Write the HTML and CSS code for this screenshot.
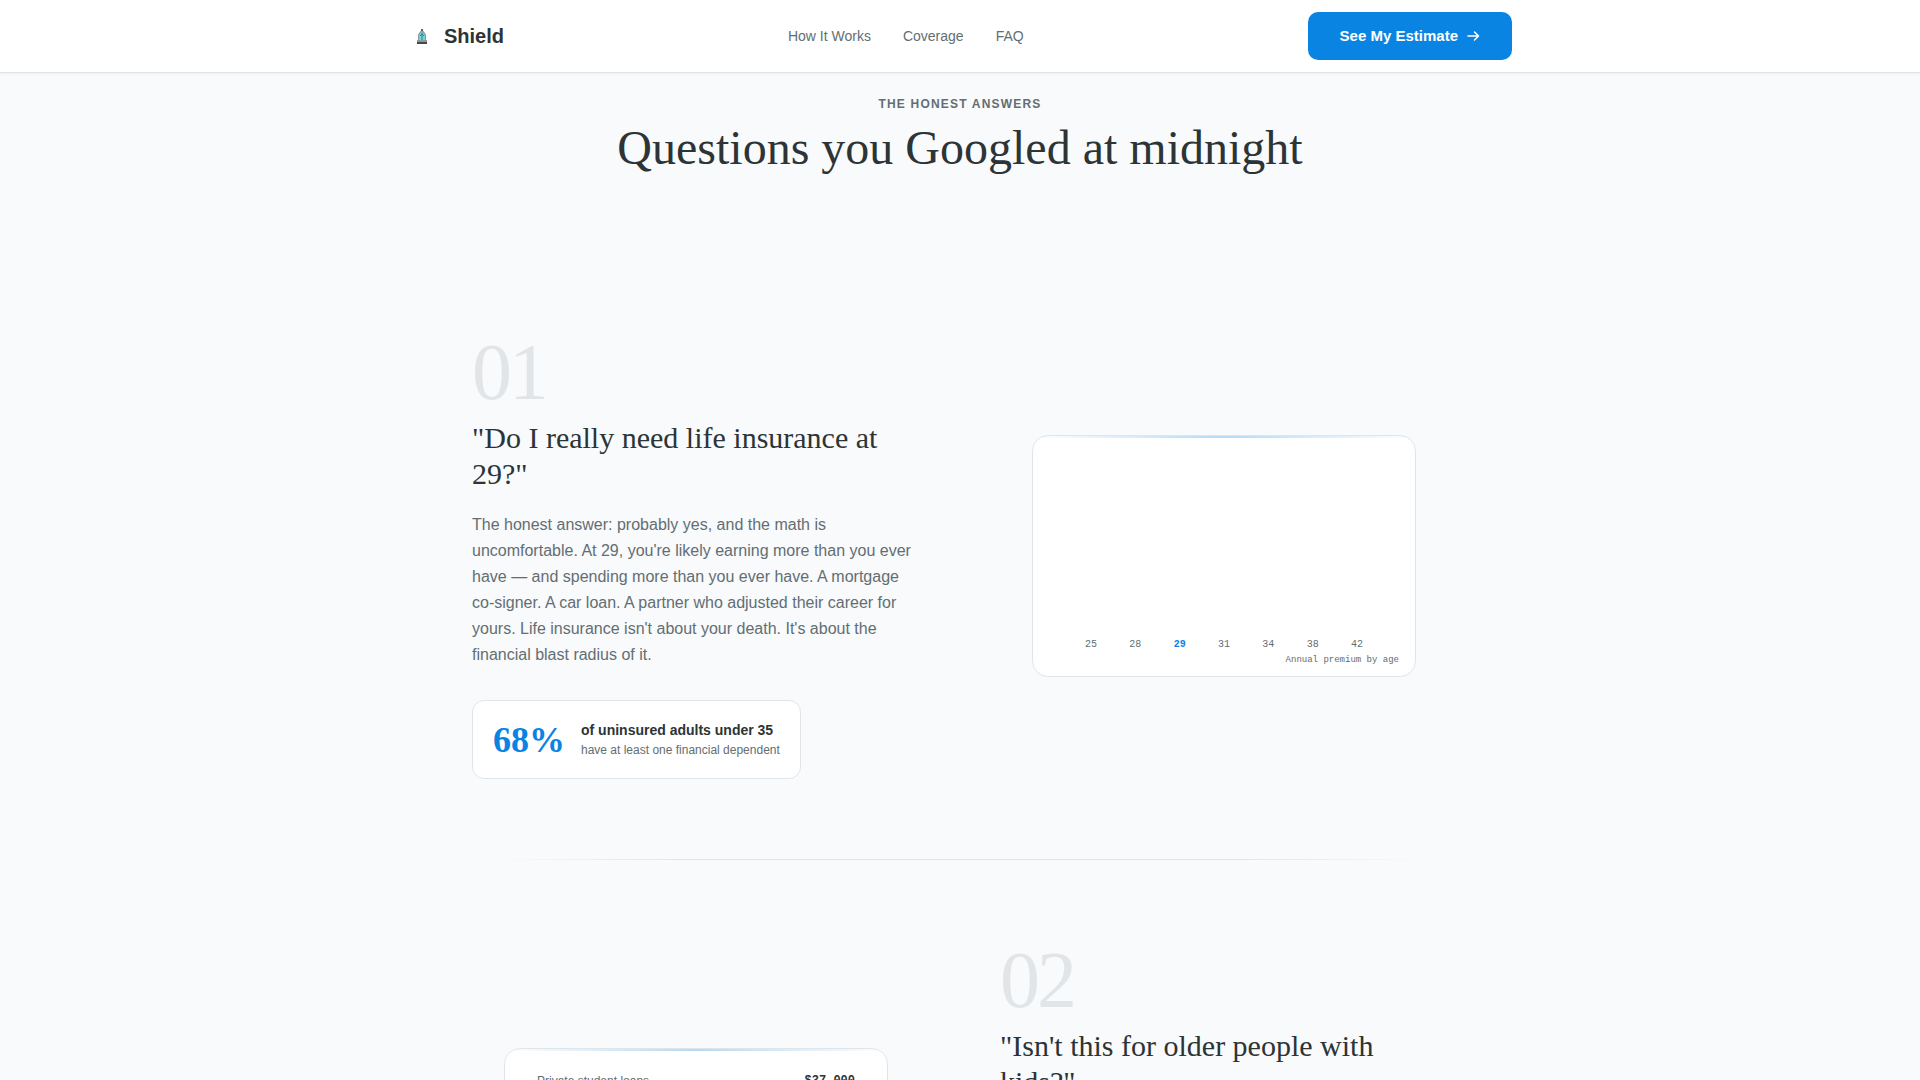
FILE: index.html
```html
<!DOCTYPE html>
<html lang="en">
<head>
<meta charset="utf-8">
<meta name="viewport" content="width=device-width, initial-scale=1">
<title>Shield</title>
<link rel="stylesheet" href="styles.css">
</head>
<body>
<header class="nav">
  <div class="nav-inner">
    <a class="brand" href="#">
      <svg class="brand-mark" viewBox="0 0 28 28" aria-hidden="true">
        <path d="M10 19v-5q0-2 1-3t3-4q2 3 3 4t1 3v5z" fill="#8d9a9c"/>
        <path d="M13 7h2v2h-2z" fill="#5b6669"/>
        <path d="M11 18v-4q0-2 3-4q3 2 3 4v4z" fill="#74d3dc"/>
        <path d="M14 11v8M12 14l2-2 2 2" stroke="#2b8794" stroke-width="1" fill="none"/>
        <path d="M9 18h10v2H9z" fill="#8d9a9c"/>
        <path d="M9 20h10v2H9z" fill="#43484b"/>
      </svg>
      <span>Shield</span>
    </a>
    <nav class="links">
      <a href="#how">How It Works</a>
      <a href="#coverage">Coverage</a>
      <a href="#faq">FAQ</a>
    </nav>
    <button class="cta" type="button">See My Estimate
      <svg viewBox="0 0 14 14" aria-hidden="true"><path d="M2 7h10.500M8.500 3l4 4-4 4" fill="none" stroke="currentColor" stroke-width="1.500" stroke-linecap="round" stroke-linejoin="round"/></svg>
    </button>
  </div>
</header>
<main id="faq">
  <div class="intro">
    <p class="eyebrow">The honest answers</p>
    <h1>Questions you Googled at midnight</h1>
  </div>
  <div class="questions">
    <article class="qa">
      <div class="qa-text">
        <div class="number">01</div>
        <h2>"Do I really need life insurance at 29?"</h2>
        <p class="answer">The honest answer: probably yes, and the math is uncomfortable. At 29, you're likely earning more than you ever have — and spending more than you ever have. A mortgage co-signer. A car loan. A partner who adjusted their career for yours. Life insurance isn't about your death. It's about the financial blast radius of it.</p>
        <div class="stat">
          <span class="stat-value">68%</span>
          <p class="stat-label"><strong>of uninsured adults under 35</strong><span>have at least one financial dependent</span></p>
        </div>
      </div>
      <div class="qa-visual">
        <div class="card chart">
          <ol class="ages">
            <li>25</li><li>28</li><li class="current">29</li><li>31</li><li>34</li><li>38</li><li>42</li>
          </ol>
          <p class="caption">Annual premium by age</p>
        </div>
      </div>
    </article>
    <hr class="divider">
    <article class="qa qa-flip">
      <div class="qa-visual">
        <div class="card debts">
          <dl>
            <dt>Private student loans</dt><dd>$37,000</dd>
          </dl>
        </div>
      </div>
      <div class="qa-text">
        <div class="number">02</div>
        <h2>"Isn't this for older people with kids?"</h2>
      </div>
    </article>
  </div>
</main>
</body>
</html>
```
FILE: styles.css
```css
* { box-sizing: border-box; margin: 0; padding: 0; }

:root {
  --ink: #2d3436;
  --muted: #636e72;
  --blue: #0984e3;
  --line: #e2e5e8;
  --sans: "Liberation Sans", Arial, sans-serif;
  --serif: "Liberation Serif", "Times New Roman", serif;
  --mono: "Liberation Mono", "Courier New", monospace;
}

body {
  background: #f8fafc;
  color: var(--ink);
  font-family: var(--sans);
  font-size: 16px;
}

.nav {
  position: sticky;
  top: 0;
  z-index: 1;
  background: #fff;
  border-bottom: 1px solid #dfe3e5;
  box-shadow: 0 1px 3px rgba(45, 52, 54, 0.06);
}
.nav-inner {
  display: flex;
  align-items: center;
  justify-content: space-between;
  max-width: 1152px;
  margin: 0 auto;
  padding: 12px 24px;
}
.brand {
  display: flex;
  align-items: center;
  gap: 8px;
  color: var(--ink);
  font-size: 20px;
  font-weight: 700;
  text-decoration: none;
}
.brand-mark { width: 28px; height: 28px; }
.links { display: flex; gap: 32px; }
.links a { color: var(--muted); font-size: 14px; text-decoration: none; }
.cta {
  display: flex;
  align-items: center;
  gap: 8px;
  height: 48px;
  padding: 0 32px;
  border: 0;
  border-radius: 10px;
  background: var(--blue);
  color: #fff;
  font: 700 15px/16px var(--sans);
}
.cta svg { width: 14px; height: 14px; }

.intro { padding: 23px 24px 76px; text-align: center; }
.eyebrow {
  color: var(--muted);
  font-size: 12px;
  font-weight: 700;
  line-height: 16px;
  letter-spacing: 0.1em;
  text-transform: uppercase;
}
h1 { margin-top: 8px; font: 400 48px/56px var(--serif); }

.questions { max-width: 1024px; margin: 0 auto; padding: 0 24px; }
.qa {
  display: grid;
  grid-template-columns: 1fr 1fr;
  gap: 80px;
  align-items: center;
  padding: 80px 0;
}
.qa-flip .qa-text { min-height: 458px; }
.number {
  color: var(--line);
  font: 400 80px/80px var(--serif);
  letter-spacing: -3px;
}
h2 { margin-top: 8px; font: 400 30px/36px var(--serif); }
.answer { margin-top: 20px; color: var(--muted); line-height: 26px; }
.stat {
  display: inline-flex;
  align-items: center;
  gap: 16px;
  margin-top: 32px;
  padding: 18px 20px;
  border: 1px solid var(--line);
  border-radius: 12px;
  background: #fff;
  vertical-align: top;
}
.stat-value { color: var(--blue); font: 700 36px/40px var(--serif); }
.stat-label { display: grid; font-size: 12px; line-height: 19px; color: var(--muted); }
.stat-label strong { color: var(--ink); font-size: 14px; line-height: 22px; }

.qa-visual { padding: 0 32px; }
.card {
  position: relative;
  display: flex;
  flex-direction: column;
  min-height: 242px;
  border: 1px solid var(--line);
  border-radius: 16px;
  background: #fff;
  overflow: hidden;
}
.card::before {
  content: "";
  position: absolute;
  inset: 0 0 auto;
  height: 2px;
  background: linear-gradient(90deg, transparent, var(--blue), transparent);
  opacity: 0.3;
}
.chart { justify-content: flex-end; padding: 10px 16px; }
.ages {
  display: flex;
  justify-content: space-between;
  padding: 0 36px;
  color: var(--muted);
  font: 10px/12px var(--mono);
  list-style: none;
}
.ages .current { color: var(--blue); font-weight: 700; }
.caption { margin-top: 3px; color: var(--muted); font: 9px/12px var(--mono); text-align: right; }
.debts { padding: 24px 32px; }
.debts dl {
  display: flex;
  align-items: center;
  justify-content: space-between;
  font-size: 12px;
  line-height: 16px;
}
.debts dt { color: var(--muted); }
.debts dd { font-family: var(--mono); font-weight: 700; }

.divider {
  height: 1px;
  margin: 0 24px;
  border: 0;
  background: linear-gradient(90deg, transparent, var(--line) 20%, var(--line) 80%, transparent);
}
```
